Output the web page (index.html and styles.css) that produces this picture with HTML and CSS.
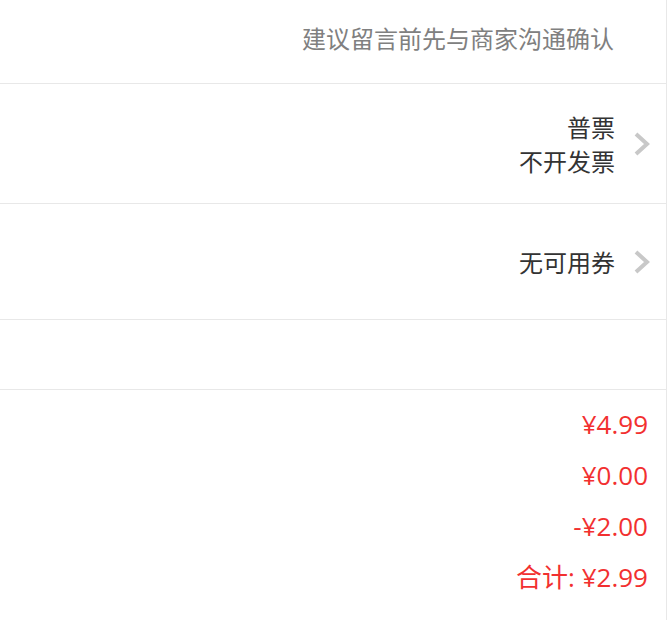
FILE: index.html
```html
<!DOCTYPE html>
<html lang="zh-CN">
<head>
    <meta charset="UTF-8">
    <meta name="viewport" content="width=device-width, initial-scale=1.0">
    <title>确认订单</title>
    <link rel="stylesheet" href="styles.css">
</head>
<body>
    <div class="order">
        <div class="row row-note">
            <span class="note">建议留言前先与商家沟通确认</span>
        </div>

        <div class="row row-invoice">
            <div class="value">
                <div>普票</div>
                <div>不开发票</div>
            </div>
            <svg class="arrow" width="18" height="26" viewBox="0 0 18 26">
                <polyline points="3,3 14,13 3,23" fill="none" stroke="#c8c8c8" stroke-width="4"/>
            </svg>
        </div>

        <div class="row row-coupon">
            <div class="value">无可用券</div>
            <svg class="arrow" width="18" height="26" viewBox="0 0 18 26">
                <polyline points="3,3 14,13 3,23" fill="none" stroke="#c8c8c8" stroke-width="4"/>
            </svg>
        </div>

        <div class="row row-empty"></div>

        <div class="prices">
            <div class="price">¥4.99</div>
            <div class="price">¥0.00</div>
            <div class="price">-¥2.00</div>
            <div class="price">合计: ¥2.99</div>
        </div>
    </div>
</body>
</html>
```

FILE: styles.css
```css
body { margin: 0; background: #fff; font-family: "Noto Sans CJK SC", "Noto Sans", sans-serif; font-size: 24px; }
.order { width: 666px; border-right: 1px solid #e8e8e8; min-height: 620px; }
.row { display: flex; align-items: center; justify-content: flex-end; border-bottom: 1px solid #e8e8e8; padding-right: 15px; }
.row-note { height: 83px; padding-right: 52px; align-items: flex-start; }
.note { color: #808080; line-height: 34px; margin-top: 21px; }
.value { color: #333; line-height: 34px; text-align: right; }
.row-invoice { height: 119px; }
.row-coupon { height: 115px; }
.row-empty { height: 69px; }
.arrow { margin-left: 18px; display: block; }
.prices { display: flex; flex-direction: column; align-items: flex-end; gap: 17px; padding: 17px 18px 0 0; }
.price { color: #f23030; font-size: 26px; line-height: 34px; font-family: "Open Sans", "Noto Sans CJK SC", sans-serif; }
```
